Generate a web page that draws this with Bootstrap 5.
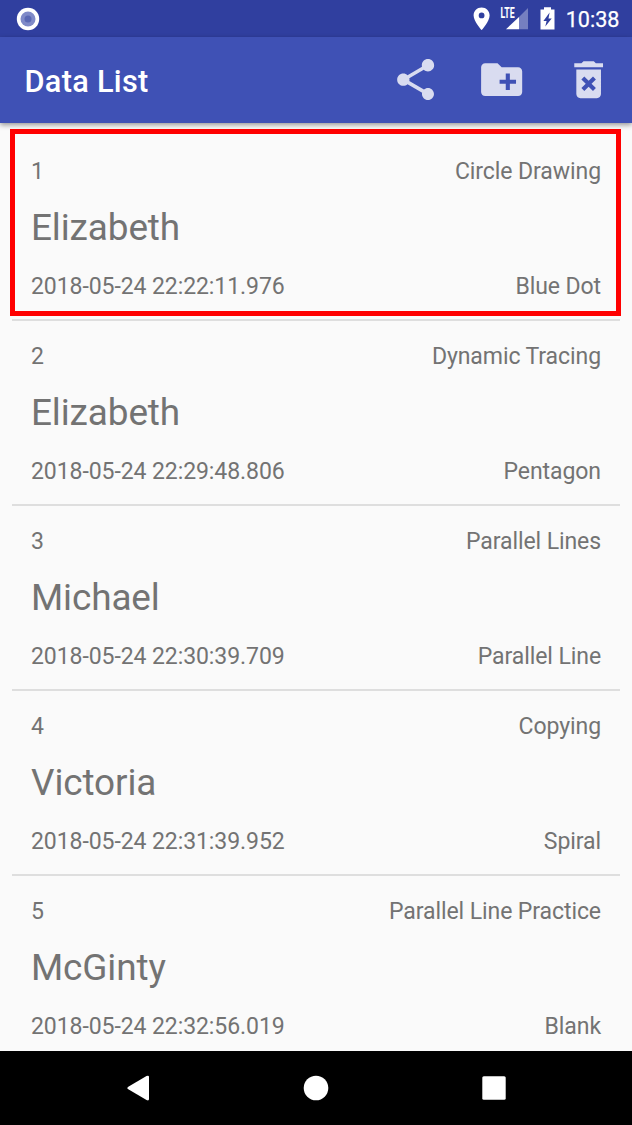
<!DOCTYPE html>
<html lang="en">
<head>
<meta charset="utf-8">
<meta name="viewport" content="width=device-width, initial-scale=1">
<title>Data List</title>
<link href="https://cdn.jsdelivr.net/npm/bootstrap@5.3.0/dist/css/bootstrap.min.css" rel="stylesheet">
<style>
  body { font-family: Roboto, sans-serif; background: #fafafa; color: #737373; }
  .screen { height: 1125px; }
  .status-bar { height: 37px; background: #303f9f; color: #fff; padding: 0 12.5px 0 16px; }
  .status-time { font-size: 21.6px; line-height: 37px; padding-top: 2px; margin-left: 11px; -webkit-text-stroke: .25px #fff; }
  .app-bar { height: 86px; background: #3f51b5; padding: 0 19px 0 24.5px; box-shadow: 0 2px 5px rgba(0,0,0,.4); z-index: 1; }
  .app-title { font-size: 30.7px; font-weight: 500; letter-spacing: .3px; line-height: 86px; color: #fff; padding-top: 3px; }
  .app-actions { gap: 37.1px; }
  .app-actions svg { width: 49.3px; height: 49.3px; fill: #d9dcf0; }
  .records { padding: 13px 12px 0; min-height: 0; }
  .list-group-flush > .record { height: 185px; padding: 22px 19px 0; border-width: 0 0 2px; border-color: #dedede; background: none; color: inherit; }
  .list-group-flush > .record:last-child { border-bottom-width: 0; }
  .record-line { font-size: 23.05px; line-height: 28px; letter-spacing: -.1px; }
  .record-name { font-size: 36.9px; line-height: 43px; letter-spacing: -.1px; margin: 20px 0 24px; }
  .selection-frame { left: 10px; top: 6px; width: 611px; height: 187px; border: 5px solid #f00; pointer-events: none; }
  .nav-keys { height: 74px; background: #000; gap: 130px; }
  .nav-keys svg { width: 48px; height: 48px; fill: #fff; }
</style>
</head>
<body>
<div class="screen d-flex flex-column overflow-hidden">
  <div class="status-bar d-flex align-items-center flex-shrink-0">
    <svg width="24" height="24" viewBox="0 0 24 24"><circle cx="12" cy="12" r="11.2" fill="#fff"/><circle cx="12" cy="12" r="7.5" fill="#7f8ac8"/><circle cx="12" cy="12" r="3.5" fill="#5a68b4"/></svg>
    <svg class="ms-auto" width="84" height="37" viewBox="470 0 84 37">
      <path fill="#fff" fill-rule="evenodd" d="M480.600 7.500c-4.500 0-8 3.500-8 7.900 0 5.800 8 14.600 8 14.600s8-8.800 8-14.600c0-4.400-3.500-7.900-8-7.900zm0 5a2.900 2.900 0 1 1 0 5.800 2.900 2.900 0 0 1 0-5.800z"/>
      <path fill="#757fc0" d="M527 8v21.200h-9V17z"/>
      <path fill="#fff" d="M518 17v12.200h-13z"/>
      <text x="499.500" y="18" font-family="Roboto" font-weight="700" font-size="14" textLength="14.200" lengthAdjust="spacingAndGlyphs" fill="#fff">LTE</text>
      <path fill="#fff" fill-rule="evenodd" d="M543 7.200h7v2.300h3.500v20h-14v-20h3.500zM548.600 12.500l-6.200 8.500h3.200l-1.300 5.600 6.400-8.200h-3.200z"/>
    </svg>
    <div class="status-time">10:38</div>
  </div>

  <header class="app-bar d-flex align-items-center justify-content-between flex-shrink-0 position-relative">
    <div class="app-title">Data List</div>
    <div class="app-actions d-flex">
      <svg viewBox="0 0 24 24" role="img" aria-label="Share"><path d="M18 16.080c-.76 0-1.440.3-1.960.77L8.910 12.700c.05-.23.09-.46.09-.7s-.04-.47-.09-.7l7.050-4.110c.54.5 1.250.81 2.040.81 1.660 0 3-1.340 3-3s-1.340-3-3-3-3 1.340-3 3c0 .24.04.47.09.7L8.040 9.810C7.500 9.310 6.790 9 6 9c-1.660 0-3 1.340-3 3s1.340 3 3 3c.79 0 1.500-.31 2.040-.81l7.120 4.160c-.05.21-.08.43-.08.65 0 1.610 1.310 2.920 2.920 2.920s2.920-1.310 2.920-2.920-1.310-2.920-2.920-2.920z"/></svg>
      <svg viewBox="0 0 24 24" role="img" aria-label="New folder"><path d="M20 6h-8l-2-2H4c-1.110 0-1.990.89-1.990 2L2 18c0 1.110.89 2 2 2h16c1.110 0 2-.89 2-2V8c0-1.110-.89-2-2-2zm-1 8h-3v3h-2v-3h-3v-2h3V9h2v3h3v2z"/></svg>
      <svg viewBox="0 0 24 24" role="img" aria-label="Delete"><path d="M6 19c0 1.100.9 2 2 2h8c1.100 0 2-.9 2-2V7H6v12zm2.460-7.120l1.410-1.410L12 12.590l2.120-2.120 1.410 1.410L13.410 14l2.120 2.120-1.410 1.410L12 15.410l-2.120 2.120-1.410-1.410L10.590 14l-2.130-2.120zM15.500 4l-1-1h-5l-1 1H5v2h14V4z"/></svg>
    </div>
  </header>

  <main class="records position-relative flex-grow-1 overflow-hidden">
    <div class="list-group list-group-flush">
      <div class="list-group-item record">
        <div class="record-line d-flex justify-content-between"><span>1</span><span>Circle Drawing</span></div>
        <div class="record-name">Elizabeth</div>
        <div class="record-line d-flex justify-content-between"><span>2018-05-24 22:22:11.976</span><span>Blue Dot</span></div>
      </div>
      <div class="list-group-item record">
        <div class="record-line d-flex justify-content-between"><span>2</span><span>Dynamic Tracing</span></div>
        <div class="record-name">Elizabeth</div>
        <div class="record-line d-flex justify-content-between"><span>2018-05-24 22:29:48.806</span><span>Pentagon</span></div>
      </div>
      <div class="list-group-item record">
        <div class="record-line d-flex justify-content-between"><span>3</span><span>Parallel Lines</span></div>
        <div class="record-name">Michael</div>
        <div class="record-line d-flex justify-content-between"><span>2018-05-24 22:30:39.709</span><span>Parallel Line</span></div>
      </div>
      <div class="list-group-item record">
        <div class="record-line d-flex justify-content-between"><span>4</span><span>Copying</span></div>
        <div class="record-name">Victoria</div>
        <div class="record-line d-flex justify-content-between"><span>2018-05-24 22:31:39.952</span><span>Spiral</span></div>
      </div>
      <div class="list-group-item record">
        <div class="record-line d-flex justify-content-between"><span>5</span><span>Parallel Line Practice</span></div>
        <div class="record-name">McGinty</div>
        <div class="record-line d-flex justify-content-between"><span>2018-05-24 22:32:56.019</span><span>Blank</span></div>
      </div>
    </div>
    <div class="selection-frame position-absolute"></div>
  </main>

  <nav class="nav-keys d-flex align-items-center justify-content-center flex-shrink-0">
    <svg viewBox="0 0 48 48" role="img" aria-label="Back"><path d="M14.300 22.700 32.500 12.100q2.500-1.200 2.500 1V35q0 2.200-2.500 1L14.300 25.200q-2-1.250 0-2.500z"/></svg>
    <svg viewBox="0 0 48 48" role="img" aria-label="Home"><circle cx="24" cy="24" r="12.300"/></svg>
    <svg viewBox="0 0 48 48" role="img" aria-label="Recents"><rect x="12.300" y="12.300" width="23.400" height="23.400" rx="1.500"/></svg>
  </nav>
</div>
<script src="https://cdn.jsdelivr.net/npm/bootstrap@5.3.0/dist/js/bootstrap.bundle.min.js"></script>
</body>
</html>
